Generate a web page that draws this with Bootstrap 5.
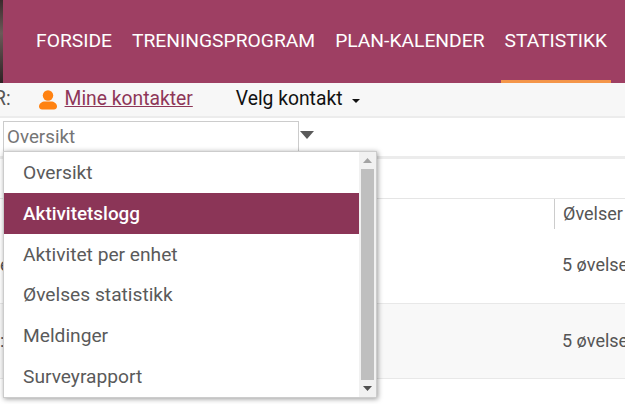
<!DOCTYPE html>
<html lang="no">
<head>
<meta charset="utf-8">
<link href="https://cdn.jsdelivr.net/npm/bootstrap@5.3.0/dist/css/bootstrap.min.css" rel="stylesheet">
<style>
html,body{height:404px;overflow:hidden;background:#fff;font-family:Roboto,sans-serif}
.top-area{height:83px}
.photo-strip{width:3px;background:linear-gradient(#3a2a2c,#6b5a58 40%,#2e2224)}
.top-nav{background:#9e3f63;padding-left:23px}
.top-link{color:#fff;font-size:19.25px;padding:0 4px;margin:0 6px;height:83px;line-height:81px;text-decoration:none;border-bottom:3px solid transparent;white-space:nowrap}
.top-link.current{border-bottom-color:#f4964a}
.sub-bar{height:35px;background:#f7f7f7;border-bottom:2px solid #ececec;font-size:19.3px;color:#111}
.cut-label{color:#555;margin-left:-6px;margin-right:27px}
.contact-link{color:#8e3658;text-decoration:underline;margin-left:7px;margin-right:43px}
.caret-mark{width:0;height:0;border-left:4px solid transparent;border-right:4px solid transparent;border-top:4px solid #111;margin-left:10px;margin-top:3px}
.page-body{position:relative;height:286px}
.pick-row{height:38px;padding:3px 0 0 3px}
.pick-input{width:296px;height:31px;border:1px solid #ccc;color:#757575;font-size:18.8px;padding-left:3px;line-height:30px}
.pick-arrow{width:0;height:0;border-left:7.5px solid transparent;border-right:7.5px solid transparent;border-top:8px solid #5a5a5a;margin:10px 0 0 1px}
.tab-rule{height:3px;background:#ececec}
.head-row{height:43px;margin-top:39px;border-top:1px solid #e5e5e5;padding-left:554px;font-size:18px;color:#555}
.head-cell{height:30px;border-left:1px solid #ccc;padding-left:8px;line-height:30px;white-space:nowrap}
.data-row{font-size:18px;color:#555;white-space:nowrap}
.row-one{height:63px;border-bottom:1px solid #e8e8e8;line-height:48px}
.row-two{height:75px;background:#f8f8f8;border-bottom:1px solid #e8e8e8;line-height:74px}
.edge-mark{flex:0 0 3px;margin-right:559px;overflow:hidden}
.cell-text{flex:0 0 auto}
.menu-pop{position:absolute;left:3px;top:33px;width:374px;height:247px;background:#fff;border:1px solid #ccc;box-shadow:1px 1px 5px rgba(0,0,0,.4);z-index:5}
.menu-items{flex:0 0 355px}
.menu-entry{height:40.8px;line-height:41px;padding-left:19px;font-size:19.2px;color:#5a5a5a}
.menu-entry.picked{background:#8b3557;color:#fff;font-weight:500;font-size:18.9px}
.scroll-track{flex:0 0 17px;background:#f1f1f1}
.scroll-btn{height:17px}
.scroll-thumb{background:#bfbfbf;margin:0 2px}
</style>
</head>
<body>
<div class="top-area d-flex">
  <div class="photo-strip"></div>
  <nav class="top-nav flex-grow-1 d-flex">
    <a class="top-link" href="#">FORSIDE</a>
    <a class="top-link" href="#">TRENINGSPROGRAM</a>
    <a class="top-link" href="#">PLAN-KALENDER</a>
    <a class="top-link current" href="#">STATISTIKK</a>
  </nav>
</div>
<div class="sub-bar d-flex align-items-center">
  <span class="cut-label">R:</span>
  <svg width="20" height="20" viewBox="0 0 20 20" aria-hidden="true"><circle cx="10" cy="5.500" r="5.200" fill="#ff8211"/><path d="M1 16.500C1 13.500 4 11.500 7 11.500h6c3 0 6 2 6 5C19 18.500 17.500 19.500 16 19.500H4C2.500 19.500 1 18.500 1 16.500z" fill="#ff8211"/></svg>
  <a class="contact-link" href="#">Mine kontakter</a>
  <span>Velg kontakt</span><span class="caret-mark"></span>
</div>
<div class="page-body">
  <div class="pick-row d-flex">
    <div class="pick-input">Oversikt</div>
    <div class="pick-arrow"></div>
  </div>
  <div class="tab-rule"></div>
  <div class="head-row"><div class="head-cell">Øvelser</div></div>
  <div class="data-row row-one d-flex"><span class="edge-mark">e</span><span class="cell-text">5 øvelser</span></div>
  <div class="data-row row-two d-flex"><span class="edge-mark">:</span><span class="cell-text">5 øvelser</span></div>
  <div class="menu-pop d-flex">
    <div class="menu-items">
      <div class="menu-entry">Oversikt</div>
      <div class="menu-entry picked">Aktivitetslogg</div>
      <div class="menu-entry">Aktivitet per enhet</div>
      <div class="menu-entry">Øvelses statistikk</div>
      <div class="menu-entry">Meldinger</div>
      <div class="menu-entry">Surveyrapport</div>
    </div>
    <div class="scroll-track d-flex flex-column">
      <div class="scroll-btn d-flex align-items-center justify-content-center"><svg width="9" height="5" viewBox="0 0 9 5" aria-hidden="true"><path d="M4.500 0 9 5H0z" fill="#a3a3a3"/></svg></div>
      <div class="scroll-thumb flex-grow-1"></div>
      <div class="scroll-btn d-flex align-items-center justify-content-center"><svg width="9" height="5" viewBox="0 0 9 5" aria-hidden="true"><path d="M0 0h9L4.500 5z" fill="#505050"/></svg></div>
    </div>
  </div>
</div>
<script src="https://cdn.jsdelivr.net/npm/bootstrap@5.3.0/dist/js/bootstrap.bundle.min.js"></script>
</body>
</html>
